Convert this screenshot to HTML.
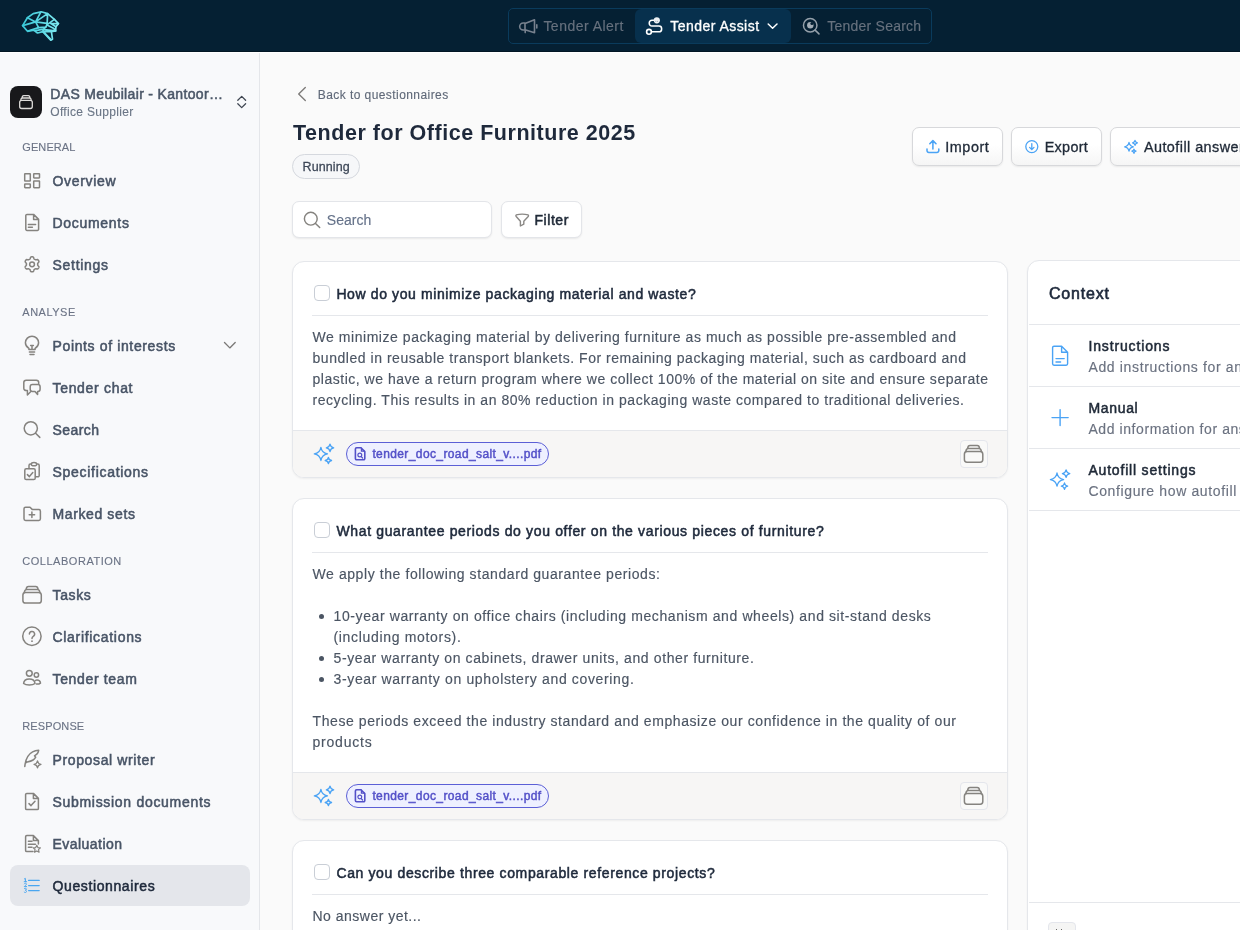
<!DOCTYPE html>
<html lang="en"><head><meta charset="utf-8"><title>Tender for Office Furniture 2025</title>
<style>
*{box-sizing:border-box;margin:0;padding:0}
html,body{width:1240px;height:930px;overflow:hidden}
body{font-family:"Liberation Sans",sans-serif;background:#fafafa;color:#1e293b;position:relative}
.t{position:absolute;white-space:pre;line-height:1}
.b{position:absolute}
#hdr{position:absolute;left:0;top:0;width:1240px;height:52px;background:#052033;border-bottom:1px solid #021624}
#hl{position:absolute;left:0;top:52px;width:1240px;height:1px;background:#fff}
#nav{position:absolute;left:508px;top:8px;width:424px;height:36px;border:1px solid #0a3b5c;border-radius:5px}
#navact{position:absolute;left:635px;top:9px;width:156px;height:34px;background:#07304d;border-radius:6px}
#side{position:absolute;left:0;top:52px;width:260px;height:878px;background:#f8f9fb;border-right:1px solid #e4e6ea}
.card{position:absolute;background:#fff;border:1px solid #e5e7eb;border-radius:12px;box-shadow:0 1px 2px rgba(0,0,0,.05)}
.btn{position:absolute;background:#fff;border:1px solid #d7d8db;border-radius:7px;box-shadow:0 1px 2px rgba(0,0,0,.07)}
.btn.g{background:linear-gradient(#fff 45%,#f5f5f5)}
.hr{position:absolute;height:1px;background:#e5e7eb}
.cb{position:absolute;width:16px;height:16px;border:1px solid #c9ced6;border-radius:4px;background:#fff}
.foot{position:absolute;background:#f7f6f5;border-top:1px solid #e5e7eb}
.pill{position:absolute;width:203px;height:24px;border:1px solid #5b5fd6;border-radius:12px;background:#eef0ff}
.ibtn{position:absolute;width:28px;height:28px;border:1px solid #e4e6ec;border-radius:4px;background:#f9f9f8}
svg{position:absolute;left:0;top:0;overflow:visible}
#tx{position:absolute;left:0;top:0;width:1240px;height:930px;will-change:transform}
</style></head>
<body>
<div id="hdr"></div><div id="nav"></div><div id="navact"></div>
<div id="side"></div><div id="hl"></div>
<div class="b" style="left:10px;top:86px;width:32px;height:32px;border-radius:8px;background:#18181b"></div>
<div class="b" style="left:10px;top:865px;width:240px;height:41px;border-radius:8px;background:#e4e6eb"></div>
<div class="b" style="left:292px;top:154px;width:68px;height:25px;border:1px solid #d5d8de;border-radius:13px;background:#f6f7f9"></div>
<div class="btn" style="left:292px;top:201px;width:200px;height:37px;border-color:#e3e5e9;border-radius:7px"></div>
<div class="btn" style="left:501px;top:201px;width:81px;height:37px;border-color:#e3e5e9;border-radius:7px"></div>
<div class="btn g" style="left:912px;top:127px;width:91px;height:39px"></div>
<div class="btn g" style="left:1011px;top:127px;width:91px;height:39px"></div>
<div class="btn g" style="left:1110px;top:127px;width:160px;height:39px"></div>
<div class="card" style="left:292px;top:261px;width:716px;height:217px"></div>
<div class="cb" style="left:314px;top:285px"></div>
<div class="hr" style="left:312px;top:315px;width:676px"></div>
<div class="foot" style="left:293px;top:430px;width:714px;height:47px;border-radius:0 0 11px 11px"></div>
<div class="pill" style="left:346px;top:442px"></div>
<div class="ibtn" style="left:960px;top:440px"></div>
<div class="card" style="left:292px;top:498px;width:716px;height:322px"></div>
<div class="cb" style="left:314px;top:522px"></div>
<div class="hr" style="left:312px;top:552px;width:676px"></div>
<div class="foot" style="left:293px;top:772px;width:714px;height:47px;border-radius:0 0 11px 11px"></div>
<div class="pill" style="left:346px;top:784px"></div>
<div class="ibtn" style="left:960px;top:782px"></div>
<div class="b" style="left:319px;top:614px;width:5px;height:5px;border-radius:50%;background:#4b5563"></div>
<div class="b" style="left:319px;top:656px;width:5px;height:5px;border-radius:50%;background:#4b5563"></div>
<div class="b" style="left:319px;top:677px;width:5px;height:5px;border-radius:50%;background:#4b5563"></div>
<div class="card" style="left:292px;top:840px;width:716px;height:122px"></div>
<div class="cb" style="left:314px;top:864px"></div>
<div class="hr" style="left:312px;top:894px;width:676px"></div>
<div class="card" style="left:1027px;top:260px;width:260px;height:700px"></div>
<div class="hr" style="left:1029px;top:324px;width:220px"></div>
<div class="hr" style="left:1029px;top:386px;width:220px"></div>
<div class="hr" style="left:1029px;top:448px;width:220px"></div>
<div class="hr" style="left:1029px;top:510px;width:220px"></div>
<div class="hr" style="left:1029px;top:902px;width:220px"></div>
<div class="ibtn" style="left:1048px;top:922px;background:#f5f5f4"></div>
<div class="b" style="left:1056px;top:929px;width:1.4px;height:2px;background:#6b6966"></div><div class="b" style="left:1060.8px;top:929px;width:1.4px;height:2px;background:#6b6966"></div>
<div id="tx">
<div class="t" style="left:543.4px;top:19px;font-size:14px;-webkit-text-stroke:0.15px #67717e;color:#67717e;letter-spacing:0.482px;">Tender Alert</div>
<div class="t" style="left:670.3px;top:19px;font-size:14px;-webkit-text-stroke:0.31px #ffffff;color:#ffffff;letter-spacing:0.456px;">Tender Assist</div>
<div class="t" style="left:827.2px;top:19px;font-size:14px;-webkit-text-stroke:0.15px #67717e;color:#67717e;letter-spacing:0.241px;">Tender Search</div>
<div class="t" style="left:50.3px;top:87px;font-size:14px;-webkit-text-stroke:0.53px #4b5768;color:#4b5768;letter-spacing:0.335px;">DAS Meubilair - Kantoor…</div>
<div class="t" style="left:50.3px;top:106px;font-size:12px;-webkit-text-stroke:0.13px #6b7686;color:#6b7686;letter-spacing:0.313px;">Office Supplier</div>
<div class="t" style="left:22.3px;top:142px;font-size:11px;-webkit-text-stroke:0.12px #6b7385;color:#6b7385;letter-spacing:0.089px;">GENERAL</div>
<div class="t" style="left:22.3px;top:307px;font-size:11px;-webkit-text-stroke:0.12px #6b7385;color:#6b7385;letter-spacing:0.509px;">ANALYSE</div>
<div class="t" style="left:22.3px;top:556px;font-size:11px;-webkit-text-stroke:0.12px #6b7385;color:#6b7385;letter-spacing:0.522px;">COLLABORATION</div>
<div class="t" style="left:22.3px;top:721px;font-size:11px;-webkit-text-stroke:0.12px #6b7385;color:#6b7385;letter-spacing:0.107px;">RESPONSE</div>
<div class="t" style="left:52.5px;top:174px;font-size:14px;-webkit-text-stroke:0.53px #485466;color:#485466;letter-spacing:0.693px;">Overview</div>
<div class="t" style="left:52.5px;top:216px;font-size:14px;-webkit-text-stroke:0.53px #485466;color:#485466;letter-spacing:0.699px;">Documents</div>
<div class="t" style="left:52.5px;top:258px;font-size:14px;-webkit-text-stroke:0.53px #485466;color:#485466;letter-spacing:0.713px;">Settings</div>
<div class="t" style="left:52.5px;top:339px;font-size:14px;-webkit-text-stroke:0.53px #485466;color:#485466;letter-spacing:0.633px;">Points of interests</div>
<div class="t" style="left:52.5px;top:381px;font-size:14px;-webkit-text-stroke:0.53px #485466;color:#485466;letter-spacing:0.684px;">Tender chat</div>
<div class="t" style="left:52.5px;top:423px;font-size:14px;-webkit-text-stroke:0.53px #485466;color:#485466;letter-spacing:0.423px;">Search</div>
<div class="t" style="left:52.5px;top:465px;font-size:14px;-webkit-text-stroke:0.53px #485466;color:#485466;letter-spacing:0.708px;">Specifications</div>
<div class="t" style="left:52.5px;top:507px;font-size:14px;-webkit-text-stroke:0.53px #485466;color:#485466;letter-spacing:0.614px;">Marked sets</div>
<div class="t" style="left:52.5px;top:588px;font-size:14px;-webkit-text-stroke:0.53px #485466;color:#485466;letter-spacing:0.641px;">Tasks</div>
<div class="t" style="left:52.5px;top:630px;font-size:14px;-webkit-text-stroke:0.53px #485466;color:#485466;letter-spacing:0.690px;">Clarifications</div>
<div class="t" style="left:52.5px;top:672px;font-size:14px;-webkit-text-stroke:0.53px #485466;color:#485466;letter-spacing:0.652px;">Tender team</div>
<div class="t" style="left:52.5px;top:753px;font-size:14px;-webkit-text-stroke:0.53px #485466;color:#485466;letter-spacing:0.628px;">Proposal writer</div>
<div class="t" style="left:52.5px;top:795px;font-size:14px;-webkit-text-stroke:0.53px #485466;color:#485466;letter-spacing:0.697px;">Submission documents</div>
<div class="t" style="left:52.5px;top:837px;font-size:14px;-webkit-text-stroke:0.53px #485466;color:#485466;letter-spacing:0.461px;">Evaluation</div>
<div class="t" style="left:52.5px;top:879px;font-size:14px;-webkit-text-stroke:0.53px #1e293b;color:#1e293b;letter-spacing:0.616px;">Questionnaires</div>
<div class="t" style="left:317.8px;top:89px;font-size:12px;-webkit-text-stroke:0.13px #5f6878;color:#5f6878;letter-spacing:0.427px;">Back to questionnaires</div>
<div class="t" style="left:293px;top:123px;font-size:21.5px;font-weight:700;color:#1e293b;letter-spacing:0.532px;">Tender for Office Furniture 2025</div>
<div class="t" style="left:302.6px;top:161px;font-size:12.5px;-webkit-text-stroke:0.27px #3d4757;color:#3d4757;letter-spacing:0.089px;">Running</div>
<div class="t" style="left:326.8px;top:213px;font-size:14px;-webkit-text-stroke:0.15px #66738a;color:#66738a;letter-spacing:0.007px;">Search</div>
<div class="t" style="left:534.5px;top:213px;font-size:14px;-webkit-text-stroke:0.53px #1f2937;color:#1f2937;letter-spacing:0.546px;">Filter</div>
<div class="t" style="left:945.3px;top:140px;font-size:14.4px;-webkit-text-stroke:0.32px #1f2937;color:#1f2937;letter-spacing:0.534px;">Import</div>
<div class="t" style="left:1044.7px;top:140px;font-size:14.4px;-webkit-text-stroke:0.32px #1f2937;color:#1f2937;letter-spacing:0.301px;">Export</div>
<div class="t" style="left:1143.9px;top:140px;font-size:14.4px;-webkit-text-stroke:0.32px #1f2937;color:#1f2937;letter-spacing:0.451px;">Autofill answers</div>
<div class="t" style="left:336.4px;top:287px;font-size:14px;-webkit-text-stroke:0.53px #1e293b;color:#1e293b;letter-spacing:0.613px;">How do you minimize packaging material and waste?</div>
<div class="t" style="left:312.5px;top:330px;font-size:14px;-webkit-text-stroke:0.15px #4b5563;color:#4b5563;letter-spacing:0.549px;">We minimize packaging material by delivering furniture as much as possible pre-assembled and</div>
<div class="t" style="left:312.5px;top:351px;font-size:14px;-webkit-text-stroke:0.15px #4b5563;color:#4b5563;letter-spacing:0.535px;">bundled in reusable transport blankets. For remaining packaging material, such as cardboard and</div>
<div class="t" style="left:312.5px;top:372px;font-size:14px;-webkit-text-stroke:0.15px #4b5563;color:#4b5563;letter-spacing:0.516px;">plastic, we have a return program where we collect 100% of the material on site and ensure separate</div>
<div class="t" style="left:312.5px;top:393px;font-size:14px;-webkit-text-stroke:0.15px #4b5563;color:#4b5563;letter-spacing:0.549px;">recycling. This results in an 80% reduction in packaging waste compared to traditional deliveries.</div>
<div class="t" style="left:372.4px;top:448px;font-size:12px;-webkit-text-stroke:0.46px #5350c8;color:#5350c8;letter-spacing:0.390px;">tender_doc_road_salt_v....pdf</div>
<div class="t" style="left:336.4px;top:524px;font-size:14px;-webkit-text-stroke:0.53px #1e293b;color:#1e293b;letter-spacing:0.651px;">What guarantee periods do you offer on the various pieces of furniture?</div>
<div class="t" style="left:312.5px;top:567px;font-size:14px;-webkit-text-stroke:0.15px #4b5563;color:#4b5563;letter-spacing:0.583px;">We apply the following standard guarantee periods:</div>
<div class="t" style="left:333.5px;top:609px;font-size:14px;-webkit-text-stroke:0.15px #4b5563;color:#4b5563;letter-spacing:0.604px;">10-year warranty on office chairs (including mechanism and wheels) and sit-stand desks</div>
<div class="t" style="left:333.5px;top:630px;font-size:14px;-webkit-text-stroke:0.15px #4b5563;color:#4b5563;letter-spacing:0.676px;">(including motors).</div>
<div class="t" style="left:333.5px;top:651px;font-size:14px;-webkit-text-stroke:0.15px #4b5563;color:#4b5563;letter-spacing:0.605px;">5-year warranty on cabinets, drawer units, and other furniture.</div>
<div class="t" style="left:333.5px;top:672px;font-size:14px;-webkit-text-stroke:0.15px #4b5563;color:#4b5563;letter-spacing:0.648px;">3-year warranty on upholstery and covering.</div>
<div class="t" style="left:312.5px;top:714px;font-size:14px;-webkit-text-stroke:0.15px #4b5563;color:#4b5563;letter-spacing:0.590px;">These periods exceed the industry standard and emphasize our confidence in the quality of our</div>
<div class="t" style="left:312.5px;top:735px;font-size:14px;-webkit-text-stroke:0.15px #4b5563;color:#4b5563;letter-spacing:0.787px;">products</div>
<div class="t" style="left:372.4px;top:790px;font-size:12px;-webkit-text-stroke:0.46px #5350c8;color:#5350c8;letter-spacing:0.390px;">tender_doc_road_salt_v....pdf</div>
<div class="t" style="left:336.4px;top:866px;font-size:14px;-webkit-text-stroke:0.53px #1e293b;color:#1e293b;letter-spacing:0.631px;">Can you describe three comparable reference projects?</div>
<div class="t" style="left:312.5px;top:909px;font-size:14px;-webkit-text-stroke:0.15px #4b5563;color:#4b5563;letter-spacing:0.490px;">No answer yet...</div>
<div class="t" style="left:1048.9px;top:286px;font-size:16px;-webkit-text-stroke:0.61px #1e293b;color:#1e293b;letter-spacing:0.808px;">Context</div>
<div class="t" style="left:1088.4px;top:339px;font-size:14px;-webkit-text-stroke:0.53px #1f2937;color:#1f2937;letter-spacing:0.867px;">Instructions</div>
<div class="t" style="left:1088.4px;top:360px;font-size:14px;-webkit-text-stroke:0.15px #6b7280;color:#6b7280;letter-spacing:0.655px;">Add instructions for answering</div>
<div class="t" style="left:1088.4px;top:401px;font-size:14px;-webkit-text-stroke:0.53px #1f2937;color:#1f2937;letter-spacing:0.680px;">Manual</div>
<div class="t" style="left:1088.4px;top:422px;font-size:14px;-webkit-text-stroke:0.15px #6b7280;color:#6b7280;letter-spacing:0.579px;">Add information for answering</div>
<div class="t" style="left:1088.4px;top:463px;font-size:14px;-webkit-text-stroke:0.53px #1f2937;color:#1f2937;letter-spacing:0.813px;">Autofill settings</div>
<div class="t" style="left:1088.4px;top:484px;font-size:14px;-webkit-text-stroke:0.15px #6b7280;color:#6b7280;letter-spacing:0.632px;">Configure how autofill works</div>
</div>
<svg width="1240" height="930" viewBox="0 0 1240 930">
<defs><linearGradient id="bg" x1="22" y1="0" x2="59" y2="0" gradientUnits="userSpaceOnUse"><stop offset="0" stop-color="#38c6d6"/><stop offset="1" stop-color="#7fe9f1"/></linearGradient></defs>
<g fill="none" stroke="url(#bg)" stroke-width="1.7" stroke-linecap="round" stroke-linejoin="round" >
<path d="M22.6 25.6 L27.4 17.7 L33.2 13.6 L41.2 11.8 L47.6 13.6 L54.4 19.4 L58.4 23.6 L55.9 26.7 L55.7 30.9 L51.4 31.7 L52.5 39.2 L50.7 40.2 L42.8 31.7 L37.5 33 L33.6 30.1 L27.5 31.3 Z"/>
<path d="M27.4 17.7 L35.6 21.9 L40.6 12.4 M35.6 21.9 L47.6 13.6 L47.1 24.4 L45.8 27.1 L38.6 27.6 L35.6 21.9 L47 23.4 M22.6 25.6 L35.6 21.9"/>
<path d="M38.6 27.6 L27.9 31 M47.2 24.6 L54.4 19.4 M50.9 23.6 L58.4 23.6 M50.9 23.6 L55.9 26.7 M47 25 L53.9 28.4 L55.7 30.9 M45.8 27.1 L43.5 29.2 L42.8 31.7 M43.5 29.2 L35.8 30.6 M44.2 29.6 L55.5 30.9 M42.8 31.7 L51.4 31.7 M44 32.4 L51 39.6"/>
</g>
<g fill="none" stroke="#78828f" stroke-width="1.6" stroke-linecap="round" stroke-linejoin="round" ><path d="M525 23.4 L534.5 19.8 V32.8 L525 29.8 Z M525 23 H523.2 A3.4 3.4 0 0 0 523.2 30 H525 M525.2 30 V32.6 M536.8 24.8 V28"/></g>
<g fill="none" stroke="#ffffff" stroke-width="1.6" stroke-linecap="round" stroke-linejoin="round" ><path d="M654 20.2 H651.9 A2.6 2.6 0 0 0 649.3 22.8 V23.4 A2.6 2.6 0 0 0 651.9 26 H659 A2.6 2.6 0 0 1 661.6 28.6 V29.2 A2.6 2.6 0 0 1 659 31.8 H651.6"/><circle cx="649" cy="31.8" r="2.4"/></g>
<circle cx="656.8" cy="20.3" r="3.1" fill="#edf1f4"/><circle cx="655.9" cy="21.3" r=".45" fill="#4a6478"/><circle cx="657.7" cy="21.3" r=".45" fill="#4a6478"/>
<g fill="none" stroke="#ffffff" stroke-width="1.5" stroke-linecap="round" stroke-linejoin="round" ><path d="M768.2 24 L772.6 28.2 L777 24"/></g>
<g fill="none" stroke="#95a0aa" stroke-width="1.5" stroke-linecap="round" stroke-linejoin="round" ><circle cx="810.2" cy="25.25" r="6.75"/><path d="M815.1 30.1 L819 33.9"/></g>
<circle cx="810.3" cy="25.3" r="3.2" fill="#a3adb6"/><circle cx="811.9" cy="23.5" r="1.5" fill="#052033"/>
<g fill="none" stroke="#dedcda" stroke-width="1.3" stroke-linecap="round" stroke-linejoin="round" ><rect x="19.7" y="100.3" width="12.6" height="8.2" rx="2"/><path d="M20.7 100.2 Q20.9 98 22.4 98 H29.6 Q31.1 98 31.3 100.2 M22 97.9 Q22.2 95.6 23.7 95.6 H28.3 Q29.8 95.6 30 97.9"/></g>
<g fill="none" stroke="#3f4652" stroke-width="1.3" stroke-linecap="round" stroke-linejoin="round" ><path d="M237.8 100.2 L241.7 96.4 L245.6 100.2 M237.8 103.8 L241.7 107.6 L245.6 103.8"/></g>
<g fill="none" stroke="#85837f" stroke-width="1.5" stroke-linecap="round" stroke-linejoin="miter"><rect x="24.7" y="173.7" width="5.6" height="7.4" rx=".4"/><rect x="33.7" y="173.7" width="5.8" height="4.2" rx=".4"/><rect x="24.7" y="184.1" width="5.6" height="3.6" rx=".4"/><rect x="33.7" y="180.9" width="5.8" height="6.8" rx=".4"/></g>
<g fill="none" stroke="#85837f" stroke-width="1.5" stroke-linecap="round" stroke-linejoin="round" ><path d="M27 214.4 H33.6 L38.6 219.4 V229.2 A1.2 1.2 0 0 1 37.4 230.4 H27 A1.2 1.2 0 0 1 25.8 229.2 V215.6 A1.2 1.2 0 0 1 27 214.4 Z M33.6 214.6 V219.4 H38.4 M28.4 224.6 H35.6 M28.4 227.2 H32.4"/></g>
<g fill="none" stroke="#85837f" stroke-width="1.5" stroke-linecap="round" stroke-linejoin="round" ><path d="M37.65 264.30 L37.65 264.54 L37.65 264.79 L37.68 265.04 L37.76 265.31 L37.99 265.62 L38.38 266.00 L38.74 266.41 L38.91 266.80 L38.91 267.14 L38.83 267.46 L38.70 267.76 L38.55 268.05 L38.37 268.33 L38.17 268.59 L37.94 268.82 L37.64 268.99 L37.22 269.04 L36.68 268.93 L36.16 268.78 L35.78 268.74 L35.50 268.80 L35.28 268.91 L35.06 269.03 L34.85 269.15 L34.64 269.27 L34.43 269.40 L34.22 269.54 L34.03 269.75 L33.88 270.10 L33.75 270.63 L33.57 271.15 L33.32 271.49 L33.02 271.66 L32.70 271.75 L32.38 271.79 L32.05 271.80 L31.72 271.79 L31.40 271.75 L31.08 271.66 L30.78 271.49 L30.53 271.15 L30.35 270.63 L30.22 270.10 L30.07 269.75 L29.88 269.54 L29.67 269.40 L29.46 269.27 L29.25 269.15 L29.04 269.03 L28.82 268.91 L28.60 268.80 L28.32 268.74 L27.94 268.78 L27.42 268.93 L26.88 269.04 L26.46 268.99 L26.16 268.82 L25.93 268.59 L25.73 268.33 L25.55 268.05 L25.40 267.76 L25.27 267.46 L25.19 267.14 L25.19 266.80 L25.36 266.41 L25.72 266.00 L26.11 265.62 L26.34 265.31 L26.42 265.04 L26.45 264.79 L26.45 264.54 L26.45 264.30 L26.45 264.06 L26.45 263.81 L26.42 263.56 L26.34 263.29 L26.11 262.98 L25.72 262.60 L25.36 262.19 L25.19 261.80 L25.19 261.46 L25.27 261.14 L25.40 260.84 L25.55 260.55 L25.73 260.27 L25.93 260.01 L26.16 259.78 L26.46 259.61 L26.88 259.56 L27.42 259.67 L27.94 259.82 L28.32 259.86 L28.60 259.80 L28.82 259.69 L29.04 259.57 L29.25 259.45 L29.46 259.33 L29.67 259.20 L29.88 259.06 L30.07 258.85 L30.22 258.50 L30.35 257.97 L30.53 257.45 L30.78 257.11 L31.08 256.94 L31.40 256.85 L31.72 256.81 L32.05 256.80 L32.38 256.81 L32.70 256.85 L33.02 256.94 L33.32 257.11 L33.57 257.45 L33.75 257.97 L33.88 258.50 L34.03 258.85 L34.22 259.06 L34.43 259.20 L34.64 259.33 L34.85 259.45 L35.06 259.57 L35.28 259.69 L35.50 259.80 L35.78 259.86 L36.16 259.82 L36.68 259.67 L37.22 259.56 L37.64 259.61 L37.94 259.78 L38.17 260.01 L38.37 260.27 L38.55 260.55 L38.70 260.84 L38.83 261.14 L38.91 261.46 L38.91 261.80 L38.74 262.19 L38.38 262.60 L37.99 262.98 L37.76 263.29 L37.68 263.56 L37.65 263.81 L37.65 264.06 Z"/><circle cx="32.05" cy="264.3" r="2.4"/></g>
<g fill="none" stroke="#85837f" stroke-width="1.5" stroke-linecap="round" stroke-linejoin="round" ><path d="M28.9 348.4 C26.6 346.9 25.4 345 25.4 342.8 A6.6 6.6 0 0 1 38.6 342.8 C38.6 345 37.4 346.9 35.1 348.4 V349.6 H28.9 Z M29.4 352 H34.6 M30 354.4 H34 M30.6 345.6 H33.4 M32 345.6 V349.4"/></g>
<g fill="none" stroke="#85837f" stroke-width="1.5" stroke-linecap="round" stroke-linejoin="round" ><path d="M38.7 383.4 V382.6 A2.4 2.4 0 0 0 36.3 380.2 H26.2 A2.4 2.4 0 0 0 23.8 382.6 V388.2 A2.4 2.4 0 0 0 26.2 390.6 H27.4 V395 L30.6 391.8"/><path d="M32.4 384.6 H37.9 A2.2 2.2 0 0 1 40.1 386.8 V389.2 A2.2 2.2 0 0 1 37.9 391.4 H37.6 V394.4 L35 391.4 H32.4 A2.2 2.2 0 0 1 30.2 389.2 V386.8 A2.2 2.2 0 0 1 32.4 384.6 Z"/></g>
<g fill="none" stroke="#85837f" stroke-width="1.5" stroke-linecap="round" stroke-linejoin="round" ><circle cx="30.8" cy="428.3" r="6.6"/><path d="M35.6 433.2 L39.8 437.4"/></g>
<g fill="none" stroke="#85837f" stroke-width="1.5" stroke-linecap="round" stroke-linejoin="round" ><rect x="24.8" y="468.8" width="10.4" height="10.8" rx="1.4"/><path d="M27.4 474.6 L29.4 476.6 L32.8 472.6"/><path d="M29 468.4 V465.4 A1.4 1.4 0 0 1 30.4 464 H31.4 A2.6 1.6 0 0 1 36.6 464 H37.8 A1.4 1.4 0 0 1 39.2 465.4 V475.4 A1.4 1.4 0 0 1 37.8 476.8 H35.6 M31.4 464.4 A2.6 1.3 0 0 0 36.6 464.4"/></g>
<g fill="none" stroke="#85837f" stroke-width="1.5" stroke-linecap="round" stroke-linejoin="round" ><path d="M25.6 507.2 H30 L32.4 509.6 H38.8 A1.6 1.6 0 0 1 40.4 511.2 V518.8 A1.6 1.6 0 0 1 38.8 520.4 H25.6 A1.6 1.6 0 0 1 24 518.8 V508.8 A1.6 1.6 0 0 1 25.6 507.2 Z M29.2 514.7 H34.6 M31.9 512 V517.4"/></g>
<g fill="none" stroke="#7b7977" stroke-width="1.35" stroke-linecap="round" stroke-linejoin="round" ><path d="M224.5 342.5 L229.8 347.9 L235.2 342.5"/></g>
<g fill="none" stroke="#85837f" stroke-width="1.5" stroke-linecap="round" stroke-linejoin="round" ><circle cx="31.9" cy="636.3" r="9.2"/><path d="M29.4 634 A2.6 2.6 0 1 1 33.2 636.4 C32.4 636.9 32 637.4 32 638.6"/></g>
<circle cx="32" cy="641.2" r=".9" fill="#85837f"/>
<g fill="none" stroke="#85837f" stroke-width="1.5" stroke-linecap="round" stroke-linejoin="round" ><circle cx="29.3" cy="673.3" r="2.9"/><path d="M23.6 683.5 C23.8 680.8 26 678.9 29.3 678.9 C32.6 678.9 34.8 680.8 35 683.5 C33.6 684.7 31.6 685.1 29.3 685.1 C27 685.1 25 684.7 23.6 683.5 Z"/><circle cx="36.4" cy="675" r="2.2"/><path d="M35.4 680.5 C35.9 680.1 36.5 680 37 680 C39 680 40.3 681.4 40.5 683.1 C39.4 683.9 37.8 684.2 36.4 684.1"/></g>
<g fill="none" stroke="#85837f" stroke-width="1.5" stroke-linecap="round" stroke-linejoin="round" ><path d="M24.8 766.4 C25.4 760.5 27.6 754.6 32.6 751.9 C34.6 750.8 36.6 750.4 38.7 750.3 C38.5 751.8 37.8 753 36.8 754.2 L34.5 755.8 L35.7 757.2 C35 758.6 34.2 759.4 33.1 760 C31.2 761.2 29.2 761.6 27.3 761.9 L25.8 762.8"/></g>
<g fill="none" stroke="#85837f" stroke-width="1.25" stroke-linecap="round" stroke-linejoin="round" ><path d="M37.5 760.8 Q37.9 763.9 41 764.3 Q37.9 764.7 37.5 767.8 Q37.1 764.7 34 764.3 Q37.1 763.9 37.5 760.8 Z"/></g>
<g fill="none" stroke="#85837f" stroke-width="1.5" stroke-linecap="round" stroke-linejoin="round" ><path d="M26.8 793.4 H33.4 L38.4 798.4 V808.4 A1.2 1.2 0 0 1 37.2 809.6 H26.8 A1.2 1.2 0 0 1 25.6 808.4 V794.6 A1.2 1.2 0 0 1 26.8 793.4 Z M33.4 793.6 V798.4 H38.2 M29 803.6 L31 805.6 L35 801.2"/></g>
<g fill="none" stroke="#85837f" stroke-width="1.5" stroke-linecap="round" stroke-linejoin="round" ><path d="M33 851.6 H26.8 A1.2 1.2 0 0 1 25.6 850.4 V836.8 A1.2 1.2 0 0 1 26.8 835.6 H33.4 L38.4 840.6 V844 M33.4 835.8 V840.6 H38.2 M28.4 841.2 H32 M28.4 844.2 H35.4 M28.4 847.2 H32"/></g>
<g fill="none" stroke="#85837f" stroke-width="1.15" stroke-linecap="round" stroke-linejoin="round" ><path d="M36.8 845.2 L37.9 847.6 L40.4 847.9 L38.5 849.6 L39.1 852.2 L36.8 850.9 L34.5 852.2 L35.1 849.6 L33.2 847.9 L35.7 847.6 Z"/></g>
<g fill="none" stroke="#4aa6f0" stroke-width="1.25" stroke-linecap="round" stroke-linejoin="round" ><path d="M28.6 880.4 H39.2 M28.6 885.5 H39.2 M28.6 890.5 H39.2"/></g>
<g fill="none" stroke="#4aa6f0" stroke-width="1.0" stroke-linecap="round" stroke-linejoin="round" ><path d="M24.4 878.9 L25.4 878.4 V881.6 M24.2 881.7 H26.6 M24.3 883.8 C24.8 882.8 26.6 883 26.4 884.3 C26.3 885.2 24.6 885.8 24.3 886.6 H26.6 M24.3 888.6 C25 887.9 26.5 888.2 26.4 889.2 C26.3 890 25.4 890.2 25.2 890.2 C25.6 890.2 26.6 890.5 26.5 891.5 C26.4 892.7 24.6 892.8 24.1 892"/></g>
<g fill="none" stroke="#7d7b79" stroke-width="1.35" stroke-linecap="round" stroke-linejoin="round" ><path d="M305.3 87.5 L298.7 94 L305.3 100.5"/></g>
<g fill="none" stroke="#85837f" stroke-width="1.45" stroke-linecap="round" stroke-linejoin="round" ><circle cx="310.8" cy="218.7" r="6.4"/><path d="M315.5 223.4 L319.7 227.6"/></g>
<g fill="none" stroke="#8a8885" stroke-width="1.4" stroke-linecap="round" stroke-linejoin="round" ><path d="M516.2 214.9 Q522.1 213.4 528.2 214.9 Q528.9 215.6 528.2 216.5 L523.8 221.2 V224.2 L520.4 226 V221.2 L516.2 216.5 Q515.5 215.6 516.2 214.9 Z"/></g>
<g fill="none" stroke="#4aa3f5" stroke-width="1.55" stroke-linecap="round" stroke-linejoin="round" ><path d="M927 149 V150.6 A1.8 1.8 0 0 0 928.8 152.4 H937 A1.8 1.8 0 0 0 938.8 150.6 V149 M932.9 149 V140.8 M929.8 143.8 L932.9 140.6 L936 143.8"/></g>
<g fill="none" stroke="#4aa3f5" stroke-width="1.3" stroke-linecap="round" stroke-linejoin="round" ><circle cx="1031.8" cy="146.6" r="6.0"/><path d="M1031.8 143.6 V149.4 M1029.6 147.4 L1031.8 149.6 L1034 147.4"/></g>
<g fill="none" stroke="#4aa3f5" stroke-width="1.2" stroke-linecap="round" stroke-linejoin="round" ><path d="M1129.00 142.44 Q1129.65 146.15 1133.36 146.80 Q1129.65 147.45 1129.00 151.16 Q1128.35 147.45 1124.64 146.80 Q1128.35 146.15 1129.00 142.44 Z"/><path d="M1135.01 140.40 Q1135.37 142.47 1137.45 142.84 Q1135.37 143.21 1135.01 145.28 Q1134.64 143.21 1132.56 142.84 Q1134.64 142.47 1135.01 140.40 Z"/><path d="M1133.95 149.04 Q1134.27 150.84 1136.06 151.16 Q1134.27 151.47 1133.95 153.27 Q1133.63 151.47 1131.84 151.16 Q1133.63 150.84 1133.95 149.04 Z"/></g>
<g fill="none" stroke="#4aa3f5" stroke-width="1.3" stroke-linecap="round" stroke-linejoin="round" ><path d="M320.90 447.30 Q321.89 452.91 327.50 453.90 Q321.89 454.89 320.90 460.50 Q319.91 454.89 314.30 453.90 Q319.91 452.91 320.90 447.30 Z"/><path d="M330.00 444.20 Q330.56 447.34 333.70 447.90 Q330.56 448.45 330.00 451.60 Q329.44 448.45 326.30 447.90 Q329.44 447.34 330.00 444.20 Z"/><path d="M328.40 457.30 Q328.88 460.02 331.60 460.50 Q328.88 460.98 328.40 463.70 Q327.92 460.98 325.20 460.50 Q327.92 460.02 328.40 457.30 Z"/></g>
<g fill="none" stroke="#4aa3f5" stroke-width="1.3" stroke-linecap="round" stroke-linejoin="round" ><path d="M320.90 789.30 Q321.89 794.91 327.50 795.90 Q321.89 796.89 320.90 802.50 Q319.91 796.89 314.30 795.90 Q319.91 794.91 320.90 789.30 Z"/><path d="M330.00 786.20 Q330.56 789.35 333.70 789.90 Q330.56 790.45 330.00 793.60 Q329.44 790.45 326.30 789.90 Q329.44 789.35 330.00 786.20 Z"/><path d="M328.40 799.30 Q328.88 802.02 331.60 802.50 Q328.88 802.98 328.40 805.70 Q327.92 802.98 325.20 802.50 Q327.92 802.02 328.40 799.30 Z"/></g>
<g fill="none" stroke="#4aa3f5" stroke-width="1.3" stroke-linecap="round" stroke-linejoin="round" ><path d="M1057.00 473.00 Q1057.99 478.61 1063.60 479.60 Q1057.99 480.59 1057.00 486.20 Q1056.01 480.59 1050.40 479.60 Q1056.01 478.61 1057.00 473.00 Z"/><path d="M1066.10 469.90 Q1066.65 473.05 1069.80 473.60 Q1066.65 474.16 1066.10 477.30 Q1065.54 474.16 1062.40 473.60 Q1065.54 473.05 1066.10 469.90 Z"/><path d="M1064.50 483.00 Q1064.98 485.72 1067.70 486.20 Q1064.98 486.68 1064.50 489.40 Q1064.02 486.68 1061.30 486.20 Q1064.02 485.72 1064.50 483.00 Z"/></g>
<g fill="none" stroke="#85837f" stroke-width="1.5" stroke-linecap="round" stroke-linejoin="round" ><rect x="22.90" y="592.40" width="18.4" height="10.6" rx="2.6"/><path d="M24.30 592.40 Q24.70 589.40 26.70 589.40 H37.50 Q39.50 589.40 39.90 592.40 M26.10 589.20 Q26.50 586.40 28.50 586.40 H35.70 Q37.70 586.40 38.10 589.20"/></g>
<g fill="none" stroke="#85837f" stroke-width="1.5" stroke-linecap="round" stroke-linejoin="round" ><rect x="964.40" y="451.60" width="18.4" height="10.6" rx="2.6"/><path d="M965.80 451.60 Q966.20 448.60 968.20 448.60 H979.00 Q981.00 448.60 981.40 451.60 M967.60 448.40 Q968.00 445.60 970.00 445.60 H977.20 Q979.20 445.60 979.60 448.40"/></g>
<g fill="none" stroke="#85837f" stroke-width="1.5" stroke-linecap="round" stroke-linejoin="round" ><rect x="964.40" y="793.60" width="18.4" height="10.6" rx="2.6"/><path d="M965.80 793.60 Q966.20 790.60 968.20 790.60 H979.00 Q981.00 790.60 981.40 793.60 M967.60 790.40 Q968.00 787.60 970.00 787.60 H977.20 Q979.20 787.60 979.60 790.40"/></g>
<g fill="none" stroke="#5350c8" stroke-width="1.6" stroke-linecap="round" stroke-linejoin="round" ><path d="M356.6 447.8 H361 L364.8 451.6 V458.6 A1.2 1.2 0 0 1 363.6 459.8 H356.6 A1.2 1.2 0 0 1 355.4 458.6 V449.0 A1.2 1.2 0 0 1 356.6 447.8 Z"/></g>
<g fill="none" stroke="#5350c8" stroke-width="1.2" stroke-linecap="round" stroke-linejoin="round" ><circle cx="359.8" cy="455.0" r="1.9"/><path d="M361.2 456.6 L362.6 458.0 M361.4 448.2 V451.2 H364.4"/></g>
<g fill="none" stroke="#5350c8" stroke-width="1.6" stroke-linecap="round" stroke-linejoin="round" ><path d="M356.6 789.8 H361 L364.8 793.6 V800.6 A1.2 1.2 0 0 1 363.6 801.8 H356.6 A1.2 1.2 0 0 1 355.4 800.6 V791.0 A1.2 1.2 0 0 1 356.6 789.8 Z"/></g>
<g fill="none" stroke="#5350c8" stroke-width="1.2" stroke-linecap="round" stroke-linejoin="round" ><circle cx="359.8" cy="797.0" r="1.9"/><path d="M361.2 798.6 L362.6 800.0 M361.4 790.2 V793.2 H364.4"/></g>
<g fill="none" stroke="#4aa3f5" stroke-width="1.4" stroke-linecap="round" stroke-linejoin="round" ><path d="M1054 346.2 H1061.6 L1067.6 352.2 V363.8 A1.4 1.4 0 0 1 1066.2 365.2 H1054 A1.4 1.4 0 0 1 1052.6 363.8 V347.6 A1.4 1.4 0 0 1 1054 346.2 Z M1061.6 346.4 V352.2 H1067.4 M1056 358.6 H1064.2 M1056 362 H1060.6"/></g>
<g fill="none" stroke="#4aa3f5" stroke-width="1.4" stroke-linecap="round" stroke-linejoin="round" ><path d="M1052 417.6 H1068.2 M1060.1 409.6 V425.6"/></g>
</svg>
</body></html>
